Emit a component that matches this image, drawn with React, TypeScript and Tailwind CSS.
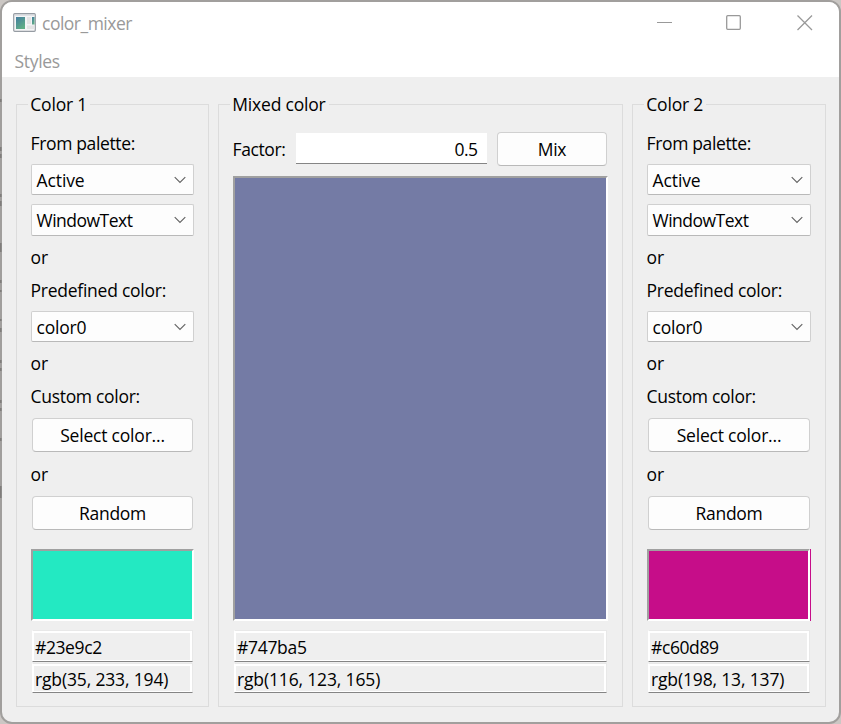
import type { ReactNode } from 'react'

function GroupBox({ title, tracking, className, children }: { title: string; tracking: string; className: string; children: ReactNode }) {
  return (
    <section className={`flex h-[603px] shrink-0 flex-col border border-[#dcdcdc] ${className}`}>
      <div className="-mt-[13px] ml-[11px] h-6 self-start whitespace-nowrap bg-[#efefef] pl-[2.300px] pr-[3px] leading-6">
        <span className={tracking}>{title}</span>
      </div>
      {children}
    </section>
  )
}

function ComboBox({ value, tracking, className }: { value: string; tracking: string; className: string }) {
  return (
    <div className={`flex shrink-0 items-center justify-between rounded-[2px] border border-[#d0d0d0] border-b-[#b9b9b9] bg-[#fdfdfd] pl-[4.500px] pr-[7px] ${className}`}>
      <span className={tracking}>{value}</span>
      <svg width="12" height="8" viewBox="0 0 12 8" fill="none" stroke="#666" strokeWidth="1.2">
        <path d="M.7 1.2 6 6.5l5.300-5.300" />
      </svg>
    </div>
  )
}

function Button({ label, tracking, className }: { label: string; tracking: string; className?: string }) {
  return (
    <button className={`flex h-[34px] shrink-0 items-center justify-center rounded-[4px] border border-[#d0d0d0] border-b-[#b9b9b9] bg-[#fdfdfd] ${className ?? ''}`}>
      <span className={tracking}>{label}</span>
    </button>
  )
}

function ReadOnlyEdit({ value, tracking, className }: { value: string; tracking: string; className: string }) {
  return (
    <div className={`shrink-0 border border-t-[#e8e8e8] border-r-[#e8e8e8] border-l-white border-b-[#858585] bg-white pl-px pr-[2px] pt-[2px] pb-px ${className}`}>
      <div className="flex h-full items-center bg-[#efefef] pl-px">
        <span className={tracking}>{value}</span>
      </div>
    </div>
  )
}

function Frame({ className }: { className: string }) {
  return <div className={`shrink-0 border-2 border-t-[#a0a0a0] border-l-[#a0a0a0] border-r-white border-b-white ${className}`} />
}

function Label({ text, tracking, className }: { text: string; tracking?: string; className: string }) {
  return <div className={`-ml-[0.500px] flex shrink-0 items-center whitespace-nowrap ${className}`}><span className={`mb-[2px] ${tracking ?? ''}`}>{text}</span></div>
}

interface ColorProps {
  title: string
  className: string
  width: string
  swatch: ReactNode
  hex: string
  rgb: string
}

function ColorGroup({ title, className, width, swatch, hex, rgb }: ColorProps) {
  return (
    <GroupBox title={title} tracking="tracking-[-0.200px]" className={className}>
      <div className={`ml-[14px] mt-[12px] flex flex-col ${width}`}>
        <Label text="From palette:" tracking="tracking-[-0.350px]" className="h-8" />
        <ComboBox value="Active" tracking="tracking-[-0.100px]" className="mt-1 h-[31px]" />
        <ComboBox value="WindowText" tracking="tracking-[-0.500px]" className="mt-[9px] h-8" />
        <Label text="or" className="h-11" />
        <Label text="Predefined color:" tracking="tracking-[-0.250px]" className="h-[22px]" />
        <ComboBox value="color0" tracking="tracking-[-0.200px]" className="mt-[9px] h-[31px]" />
        <Label text="or" className="h-11" />
        <Label text="Custom color:" tracking="tracking-[-0.300px]" className="h-[22px]" />
        <Button label="Select color..." tracking="tracking-[-0.200px]" className="mx-px mt-[10px]" />
        <Label text="or" className="h-11 pt-px" />
        <Button label="Random" tracking="tracking-[-0.300px]" className="mx-px" />
        <div className="mt-[19px] flex h-[72px]">{swatch}</div>
        <ReadOnlyEdit value={hex} tracking="tracking-[-0.400px]" className="mx-px mt-[9px] h-8" />
        <ReadOnlyEdit value={rgb} tracking="tracking-[-0.150px]" className="mx-px mt-px h-[30px]" />
      </div>
    </GroupBox>
  )
}

function AppIcon() {
  return (
    <svg width="24" height="20" viewBox="0 0 24 20">
      <defs>
        <linearGradient id="pane" x1="0" y1="0" x2=".6" y2="1">
          <stop stopColor="#437da0" />
          <stop offset="1" stopColor="#60ae86" />
        </linearGradient>
      </defs>
      <rect x=".7" y=".7" width="21.600" height="17.600" rx="1" fill="#f4f5f6" stroke="#969ca3" strokeWidth="1.2" />
      <path d="M1.500 2h20" stroke="#c9ced4" strokeWidth="1.200" />
      <rect x="3" y="4" width="9" height="12" fill="url(#pane)" />
      <path d="M14 4h4v7h-4zM14 12.500h7.500v3.500h-7.500z" fill="#e4e4e5" />
      <rect x="19" y="4" width="2.500" height="7.500" fill="url(#pane)" />
    </svg>
  )
}

export default function App() {
  return (
    <div className="relative h-[724px] w-[841px] overflow-hidden bg-[#cbc7c4] text-[17.500px] leading-6 text-black [font-family:'Open_Sans','Noto_Sans',sans-serif]">
      <div className="flex h-full flex-col overflow-hidden rounded-[12px] border-2 border-[#a19f9d] bg-[#efefef]">
        <header className="h-[75px] shrink-0 bg-white text-[#999]">
          <div className="flex h-[42px] items-center pl-[11px]">
            <AppIcon />
            <span className="mb-px ml-[5px] tracking-[-0.500px]">color_mixer</span>
            <svg className="ml-auto mr-[26px]" width="156" height="18" viewBox="0 0 156 18" fill="none" stroke="#999" strokeWidth="1.300">
              <path d="M0 8.500h15" strokeWidth="1" />
              <rect x="69.700" y="1.700" width="13.600" height="13.600" rx="1" />
              <path d="m140.500 1.500 14.500 14.500m0-14.500-14.500 14.500" />
            </svg>
          </div>
          <nav className="flex h-[33px] items-start pl-[12.500px] pt-[4.500px]"><span className="tracking-[-0.300px]">Styles</span></nav>
        </header>
        <main className="flex pl-[14px] pt-[27px]">
          <ColorGroup
            title="Color 1"
            className="w-[193px]"
            width="w-[163px]"
            swatch={<Frame className="w-[163px] bg-[#23e9c2]" />}
            hex="#23e9c2"
            rgb="rgb(35, 233, 194)"
          />
          <GroupBox title="Mixed color" tracking="tracking-[-0.200px]" className="ml-[9px] w-[405px]">
            <div className="ml-[14px] mt-[16px] flex w-[375px] flex-col">
              <div className="flex h-[34px]">
                <Label text="Factor:" tracking="tracking-[-0.400px]" className="h-[36px] w-[63px]" />
                <div className="mt-px flex h-[31px] w-[191px] items-center justify-end border-b border-[#858585] bg-white pr-[9px]">
                  <span className="relative top-px tracking-[-0.500px]">0.5</span>
                </div>
                <Button label="Mix" tracking="tracking-[-0.300px]" className="ml-[10.500px] w-[110px]" />
              </div>
              <Frame className="mt-[10px] h-[445px] bg-[#747ba5]" />
              <ReadOnlyEdit value="#747ba5" tracking="tracking-[-0.300px]" className="mx-px mt-[9px] h-8" />
              <ReadOnlyEdit value="rgb(116, 123, 165)" tracking="tracking-[-0.150px]" className="mx-px mt-px h-[30px]" />
            </div>
          </GroupBox>
          <ColorGroup
            title="Color 2"
            className="ml-[9px] w-[194px]"
            width="w-[164px]"
            swatch={<><Frame className="w-[163px] bg-[#c60d89]" /><div className="w-px bg-[#c60d89]" /></>}
            hex="#c60d89"
            rgb="rgb(198, 13, 137)"
          />
        </main>
      </div>
      {/* dark traces of the window behind, showing at the left edge */}
      <svg className="absolute left-0 top-0" width="2" height="724" stroke="#7f7c7a" strokeWidth="1.500">
        <path d="M.8 99v3M.8 147v4M.8 154v4M.8 194v3M.8 201v5M.8 243v9M.8 280v3M.8 290v2M.8 319v2M.8 328v4M.8 360v3M.8 368v3M.8 400v3M.8 408v3M.8 438v3M.8 486v12" />
      </svg>
    </div>
  )
}
